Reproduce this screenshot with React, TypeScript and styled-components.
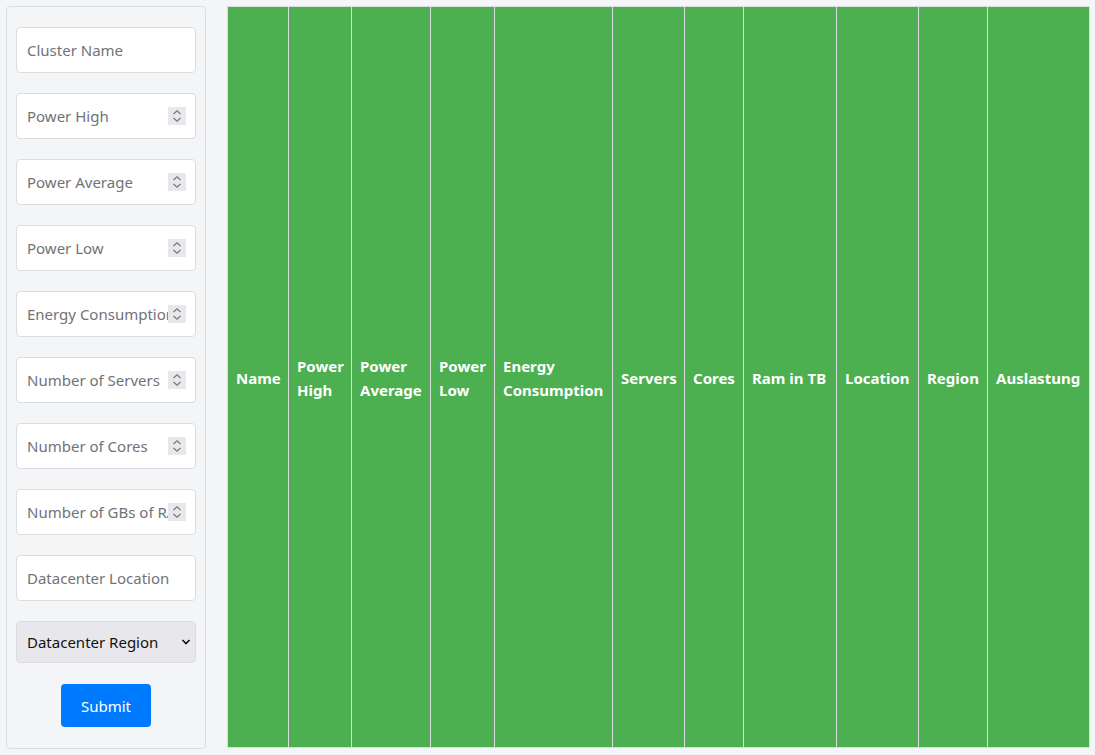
import React from "react";
import styled, { createGlobalStyle } from "styled-components";

const Global = createGlobalStyle`
  html, body { margin: 0; padding: 0; background: #f4f5f7; }
  body { font-family: "Segoe UI", "Noto Sans", "Open Sans", sans-serif; }
  * { box-sizing: border-box; }
`;

const Page = styled.div`
  display: flex;
  align-items: flex-start;
  gap: 21px;
  padding: 6px;
  height: 755px;
`;

const Panel = styled.form`
  width: 200px;
  flex: 0 0 200px;
  height: 743px;
  border: 1px solid #dcdde0;
  border-radius: 4px;
  background: #f4f5f7;
  padding: 20px 9px 0;
  display: flex;
  flex-direction: column;
  gap: 20px;
`;

const Field = styled.div`
  display: flex;
  align-items: center;
  height: 46px;
  flex: 0 0 46px;
  background: #fff;
  border: 1px solid #dcdde0;
  border-radius: 4px;
  padding: 0 10px;
`;

const Input = styled.input`
  flex: 1;
  min-width: 0;
  border: none;
  outline: none;
  background: transparent;
  font-family: "Segoe UI", "Noto Sans", sans-serif;
  font-size: 15px;
  padding: 0;
  color: #222;
  &::placeholder { color: #707378; }
`;

const Spin = styled.span`
  flex: 0 0 18px;
  width: 18px;
  height: 18px;
  margin-right: -1px;
  background: #e8e8ec;
  display: flex;
  align-items: center;
  justify-content: center;
`;

const SelectWrap = styled.div`
  display: flex;
  align-items: center;
  justify-content: space-between;
  height: 42px;
  flex: 0 0 42px;
  background: #e8e8ec;
  border: 1px solid #dcdde0;
  border-radius: 4px;
  padding: 0 4px 1px 10px;
  font-size: 15px;
  color: #111;
`;

const Submit = styled.button`
  align-self: center;
  width: 90px;
  height: 43px;
  flex: 0 0 43px;
  background: #007bff;
  color: #fff;
  border: none;
  border-radius: 4px;
  font-family: "Segoe UI", "Noto Sans", sans-serif;
  font-size: 15px;
  margin-top: 1px;
`;

const Table = styled.table`
  width: 862px;
  height: 742px;
  border-collapse: collapse;
  table-layout: fixed;
  background: #4caf50;
`;

const Th = styled.th`
  border: 1px solid #dcdde0;
  color: #fff;
  font-family: "Segoe UI", "Noto Sans", sans-serif;
  font-weight: 700;
  font-size: 15px;
  line-height: 24px;
  text-align: left;
  padding: 1px 8px 0;
  vertical-align: middle;
`;

const Chevrons = () => (
  <svg width="10" height="14" viewBox="0 0 10 14" fill="none" stroke="#77787c" strokeWidth="1.2">
    <path d="M1.5 5 L5 1.8 L8.5 5" />
    <path d="M1.5 9 L5 12.2 L8.5 9" />
  </svg>
);

const fields: { label: string; number: boolean }[] = [
  { label: "Cluster Name", number: false },
  { label: "Power High", number: true },
  { label: "Power Average", number: true },
  { label: "Power Low", number: true },
  { label: "Energy Consumption", number: true },
  { label: "Number of Servers", number: true },
  { label: "Number of Cores", number: true },
  { label: "Number of GBs of RAM", number: true },
  { label: "Datacenter Location", number: false },
];

const columns: { label: React.ReactNode; w: number }[] = [
  { label: "Name", w: 61 },
  { label: <>Power<br />High</>, w: 63 },
  { label: <>Power<br />Average</>, w: 79 },
  { label: <>Power<br />Low</>, w: 64 },
  { label: <>Energy<br />Consumption</>, w: 118 },
  { label: "Servers", w: 72 },
  { label: "Cores", w: 59 },
  { label: "Ram in TB", w: 93 },
  { label: "Location", w: 82 },
  { label: "Region", w: 69 },
  { label: "Auslastung", w: 102 },
];

export default function App() {
  return (
    <>
      <Global />
      <Page>
        <Panel onSubmit={(e) => e.preventDefault()}>
          {fields.map((f) => (
            <Field key={f.label}>
              <Input placeholder={f.label} />
              {f.number && (
                <Spin>
                  <Chevrons />
                </Spin>
              )}
            </Field>
          ))}
          <SelectWrap>
            <span>Datacenter Region</span>
            <svg width="10" height="8" viewBox="0 0 10 8" fill="none" stroke="#111" strokeWidth="1.6">
              <path d="M1.5 2 L5 5.5 L8.5 2" />
            </svg>
          </SelectWrap>
          <Submit type="submit">Submit</Submit>
        </Panel>
        <Table>
          <colgroup>
            {columns.map((c, i) => (
              <col key={i} style={{ width: c.w }} />
            ))}
          </colgroup>
          <thead>
            <tr>
              {columns.map((c, i) => (
                <Th key={i}>{c.label}</Th>
              ))}
            </tr>
          </thead>
        </Table>
      </Page>
    </>
  );
}
